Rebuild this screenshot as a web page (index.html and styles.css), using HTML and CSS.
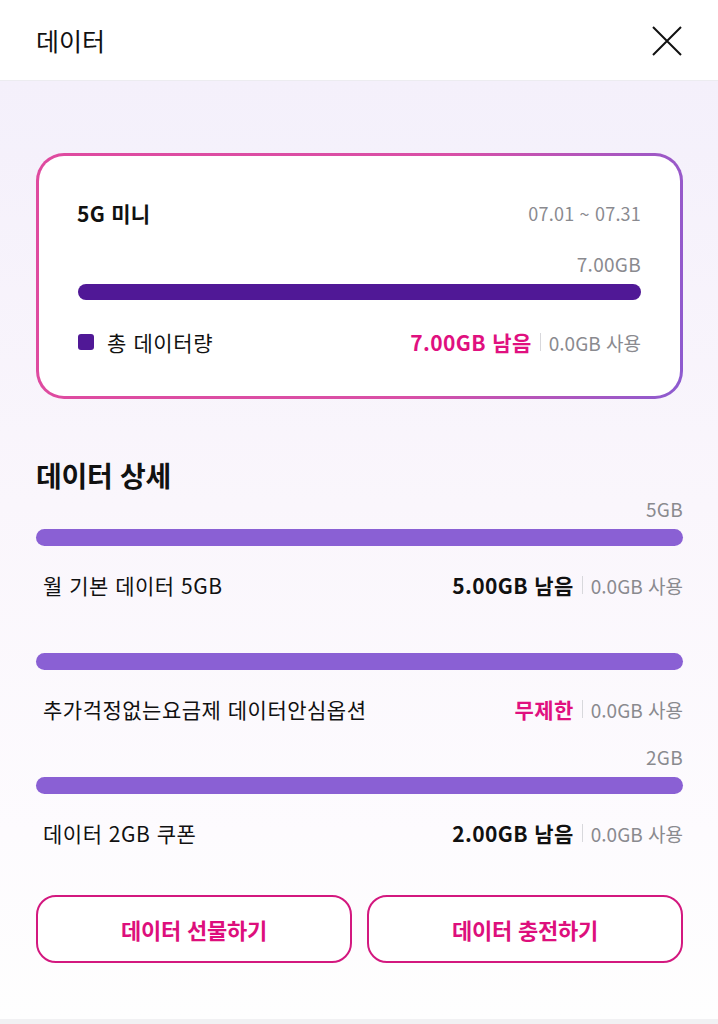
FILE: index.html
```html
<!DOCTYPE html>
<html lang="ko">
<head>
<meta charset="utf-8">
<title>데이터</title>
<link rel="stylesheet" href="styles.css">
</head>
<body>
<header class="topbar">
  <h1 class="topbar-title">데이터</h1>
  <button class="close-btn" aria-label="닫기">
    <svg width="32" height="32" viewBox="0 0 32 32"><path d="M2 2 L30 30 M30 2 L2 30" stroke="#111" stroke-width="2" fill="none"/></svg>
  </button>
</header>
<main class="content">
  <section class="plan-card">
    <div class="plan-inner">
      <div class="plan-head">
        <span class="plan-name">5G 미니</span>
        <span class="plan-date">07.01 ~ 07.31</span>
      </div>
      <div class="bar-label">7.00GB</div>
      <div class="bar bar-dark"></div>
      <div class="plan-legend">
        <span class="legend-left"><span class="legend-dot"></span>총 데이터량</span>
        <span class="amounts"><span class="remain pink">7.00GB 남음</span><span class="sep"></span><span class="used">0.0GB 사용</span></span>
      </div>
    </div>
  </section>

  <h2 class="section-title">데이터 상세</h2>

  <div class="detail-list">
    <div class="detail-item">
      <div class="bar-label">5GB</div>
      <div class="bar bar-light"></div>
      <div class="detail-row">
        <span class="detail-name">월 기본 데이터 5GB</span>
        <span class="amounts"><span class="remain">5.00GB 남음</span><span class="sep"></span><span class="used">0.0GB 사용</span></span>
      </div>
    </div>
    <div class="detail-item">
      <div class="bar-label"></div>
      <div class="bar bar-light"></div>
      <div class="detail-row">
        <span class="detail-name">추가걱정없는요금제 데이터안심옵션</span>
        <span class="amounts"><span class="remain pink">무제한</span><span class="sep"></span><span class="used">0.0GB 사용</span></span>
      </div>
    </div>
    <div class="detail-item">
      <div class="bar-label">2GB</div>
      <div class="bar bar-light"></div>
      <div class="detail-row">
        <span class="detail-name">데이터 2GB 쿠폰</span>
        <span class="amounts"><span class="remain">2.00GB 남음</span><span class="sep"></span><span class="used">0.0GB 사용</span></span>
      </div>
    </div>
  </div>

  <div class="actions">
    <button class="action-btn">데이터 선물하기</button>
    <button class="action-btn">데이터 충전하기</button>
  </div>
</main>
<div class="bottom-strip"></div>
</body>
</html>
```

FILE: styles.css
```css
* { box-sizing: border-box; }
html, body { margin: 0; padding: 0; }
body {
  width: 718px;
  font-family: "Noto Sans CJK KR", "Noto Sans", sans-serif;
  color: #111;
  background: #fff;
}
.topbar {
  height: 81px;
  display: flex;
  align-items: center;
  justify-content: space-between;
  padding: 0 36px 0 36px;
  background: #fff;
  border-bottom: 1px solid #ececf0;
}
.topbar-title {
  margin: 0;
  font-size: 25px;
  font-weight: 400;
  line-height: 32px;
  letter-spacing: 0;
}
.close-btn {
  border: 0;
  background: none;
  padding: 0;
  width: 32px;
  height: 32px;
  margin-right: -1px;
  margin-top: 1px;
}
.close-btn svg { display: block; }
.content {
  padding: 72px 35px 56px 36px;
  background: linear-gradient(180deg, #f4f0fb 0%, #faf6fc 45%, #fdfbfe 80%, #fefefe 100%);
}
.plan-card {
  border-radius: 28px;
  padding: 3px;
  background: linear-gradient(100deg, #df4a9f 0%, #d94fa6 60%, #8c5bd0 100%);
}
.plan-inner {
  background: #fff;
  border-radius: 25px;
  padding: 43px 39px 40px 39px;
}
.plan-head {
  display: flex;
  justify-content: space-between;
  align-items: center;
  height: 28px;
}
.plan-name {
  font-size: 21px;
  font-weight: 700;
  letter-spacing: 0.3px;
  margin-left: -1px;
}
.plan-date {
  font-size: 18px;
  color: #8a8a8f;
  letter-spacing: 0.2px;
}
.bar-label {
  height: 24px;
  line-height: 24px;
  text-align: right;
  font-size: 19px;
  color: #8a8a8f;
  letter-spacing: 0.3px;
}
.plan-head + .bar-label { margin-top: 25px; }
.bar {
  margin-top: 8px;
  border-radius: 9px;
}
.bar-dark { height: 16px; background: #501896; }
.bar-light { height: 17px; background: #8a60d4; }
.plan-legend {
  margin-top: 28px;
  height: 28px;
  display: flex;
  justify-content: space-between;
  align-items: center;
}
.legend-left {
  display: flex;
  align-items: center;
  font-size: 21px;
  letter-spacing: 0.6px;
}
.legend-dot {
  width: 16px;
  height: 16px;
  border-radius: 3px;
  background: #501896;
  margin-right: 13px;
}
.amounts {
  display: flex;
  align-items: center;
}
.remain {
  font-size: 21px;
  font-weight: 700;
  letter-spacing: 0.4px;
  color: #111;
}
.remain.pink { color: #e0107f; }
.sep {
  width: 1px;
  height: 18px;
  background: #d8d8dc;
  margin: 0 8px 0 8px;
}
.used {
  font-size: 19px;
  color: #8a8a8f;
  letter-spacing: 0;
}
.section-title {
  margin: 59px 0 0 0;
  font-size: 28px;
  line-height: 34px;
  font-weight: 700;
  letter-spacing: -0.3px;
}
.detail-list {
  margin-top: 5px;
  display: flex;
  flex-direction: column;
  gap: 22px;
}
.detail-row {
  margin-top: 25px;
  height: 28px;
  display: flex;
  justify-content: space-between;
  align-items: center;
  padding-left: 7px;
}
.detail-name {
  font-size: 21px;
  letter-spacing: 0.5px;
}
.actions {
  margin-top: 48px;
  display: grid;
  grid-template-columns: 1fr 1fr;
  gap: 15px;
}
.action-btn {
  height: 68px;
  border: 2px solid #d3187f;
  border-radius: 20px;
  background: #fff;
  color: #dd0f7c;
  font-family: "Noto Sans CJK KR", "Noto Sans", sans-serif;
  font-size: 22px;
  font-weight: 700;
  letter-spacing: -0.2px;
}
.bottom-strip {
  height: 5px;
  background: #f1f1f3;
}
```
